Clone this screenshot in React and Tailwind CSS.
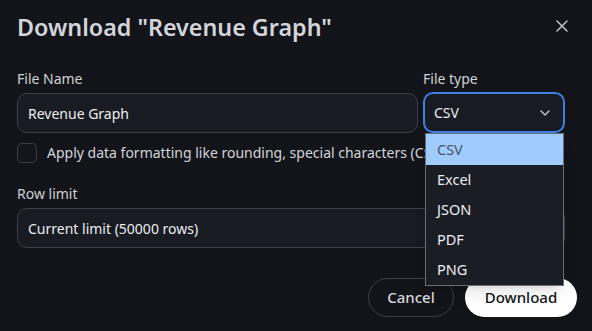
import React from "react";

export default function App() {
  const options = ["CSV", "Excel", "JSON", "PDF", "PNG"];
  return (
    <div
      className="relative w-[592px] h-[331px] overflow-hidden bg-[#121419] text-[#d4d6db]"
      style={{ fontFamily: '"Noto Sans", "Open Sans", sans-serif' }}
    >
      <div className="flex items-start justify-between pl-[17px] pr-[24px] pt-[11px]">
        <h1 className="text-[23.3px] leading-[32px] font-semibold text-[#d3d5da]">
          Download "Revenue Graph"
        </h1>
        <button className="mt-[9px] text-[#c2c4c9]">
          <svg width="12" height="12" viewBox="0 0 12 12" fill="none" stroke="currentColor" strokeWidth="1.5" strokeLinecap="round">
            <path d="M1 1L11 11M11 1L1 11" />
          </svg>
        </button>
      </div>

      <div className="pl-[17px] pr-[27px] mt-[26px]">
        <div className="flex gap-[5px]">
          <div className="flex-1 flex flex-col">
            <label className="text-[14px] leading-[20px] text-[#cfd1d6] mb-[4px]">File Name</label>
            <div className="h-[40px] rounded-[10px] border border-[#3c3f48] bg-[#181b22] flex items-center px-[10px] text-[14px] text-[#eceef1]">
              Revenue Graph
            </div>
          </div>
          <div className="w-[142px] flex flex-col">
            <label className="text-[14px] leading-[20px] text-[#cfd1d6] mb-[3px]">File type</label>
            <div className="h-[41px] rounded-[10px] border-2 border-[#3f7fe6] bg-[#181b22] flex items-center justify-between pl-[9px] pr-[13px] text-[14px] text-[#eceef1]">
              <span>CSV</span>
              <svg width="10" height="6" viewBox="0 0 10 6" fill="none" stroke="#c9cbd0" strokeWidth="1.3" strokeLinecap="round" strokeLinejoin="round">
                <path d="M1 1L5 5L9 1" />
              </svg>
            </div>
          </div>
        </div>

        <div className="flex items-center mt-[10px] gap-[10px]">
          <div className="w-[20px] h-[20px] rounded-[5px] border border-[#3c3f48] bg-[#14161c]" />
          <span className="text-[14px] leading-[20px] text-[#d2d4d9] whitespace-nowrap">
            Apply data formatting like rounding, special characters (CSV only)
          </span>
        </div>

        <div className="mt-[21px] flex flex-col">
          <label className="text-[14px] leading-[20px] text-[#cfd1d6] mb-[4px]">Row limit</label>
          <div className="h-[40px] rounded-[10px] border border-[#3c3f48] bg-[#181b22] flex items-center px-[10px] text-[14px] text-[#eceef1]">
            Current limit (50000 rows)
          </div>
        </div>
      </div>

      <div className="flex justify-end gap-[11px] pr-[15px] mt-[30px]">
        <button className="h-[39px] w-[86px] rounded-full border border-[#3c3f48] text-[15px] font-medium text-[#d6d8dd]">
          Cancel
        </button>
        <button className="h-[39px] w-[112px] rounded-full bg-white text-[15px] font-medium text-[#111318]">
          Download
        </button>
      </div>

      <div className="absolute left-[425px] top-[133px] w-[139px] border border-[#6b6e76] bg-[#1a1d24] shadow-lg">
        {options.map((o, i) => (
          <div
            key={o}
            className={
              "flex items-center px-[11px] text-[14.5px] " +
              (i === 0 ? "bg-[#9fcbfd] text-[#4b5563] h-[31px]" : "text-[#eceef1] h-[30px]")
            }
          >
            {o}
          </div>
        ))}
      </div>
    </div>
  );
}
